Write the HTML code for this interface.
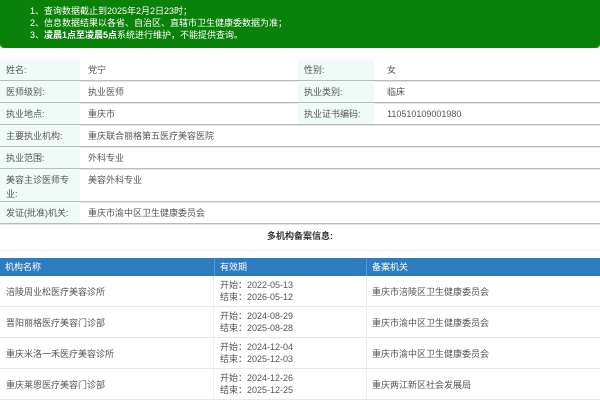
<!DOCTYPE html>
<html><head><meta charset="utf-8"><style>
*{margin:0;padding:0;box-sizing:border-box}
body{width:600px;height:400px;overflow:hidden;background:#fff;font-family:"Liberation Sans","Noto Sans CJK SC",sans-serif;font-size:9px;color:#555}
.banner{position:absolute;left:0;top:0;width:600px;height:48px;background:#0a820a;border-radius:0 0 4px 4px;color:#fff;font-size:9px;line-height:12px;padding:5px 0 0 30px}
.r{position:absolute;left:0;width:600px;border-bottom:1px solid #bbb;box-shadow:0 1px 0 #e4e4e4}
.c{position:absolute;top:0;height:100%;padding:0 0 0 6px;display:flex;align-items:center}
.lb{background:#f0fbf7}
.h{position:absolute;left:0;top:258px;width:600px;height:18px;background:#2e7cc0;color:#fff}
.h div{position:absolute;top:0;height:18px;line-height:18px;padding-left:5px;border-left:1px solid #5b9ad0}
.t{position:absolute;left:0;width:600px;border-bottom:1px solid #e6e6e6}
.t div{position:absolute;top:0;height:100%;display:flex;align-items:center;padding-left:6px}
</style></head><body>
<div class="banner">1、查询数据截止到2025年2月2日23时；<br>2、信息数据结果以各省、自治区、直辖市卫生健康委数据为准；<br>3、<b>凌晨1点至凌晨5点</b>系统进行维护，不能提供查询。</div>

<div class="r" style="top:59px;height:22px"><div class="c lb" style="left:0;width:80px">姓名:</div><div class="c" style="left:82px">党宁</div><div class="c lb" style="left:298px;width:76px">性别:</div><div class="c" style="left:381px">女</div></div>
<div class="r" style="top:81px;height:22px"><div class="c lb" style="left:0;width:80px">医师级别:</div><div class="c" style="left:82px">执业医师</div><div class="c lb" style="left:298px;width:76px">执业类别:</div><div class="c" style="left:381px">临床</div></div>
<div class="r" style="top:103px;height:22px"><div class="c lb" style="left:0;width:80px">执业地点:</div><div class="c" style="left:82px">重庆市</div><div class="c lb" style="left:298px;width:76px">执业证书编码:</div><div class="c" style="left:381px">110510109001980</div></div>
<div class="r" style="top:125px;height:22px"><div class="c lb" style="left:0;width:80px">主要执业机构:</div><div class="c" style="left:82px">重庆联合丽格第五医疗美容医院</div></div>
<div class="r" style="top:147px;height:22px"><div class="c lb" style="left:0;width:80px">执业范围:</div><div class="c" style="left:82px">外科专业</div></div>
<div class="r" style="top:169px;height:33px"><div class="c lb" style="left:0;width:80px;align-items:flex-start;padding-top:4px;line-height:14px">美容主诊医师专<br>业:</div><div class="c" style="left:82px;align-items:flex-start;padding-top:4px">美容外科专业</div></div>
<div class="r" style="top:202px;height:22px"><div class="c lb" style="left:0;width:80px">发证(批准)机关:</div><div class="c" style="left:82px">重庆市渝中区卫生健康委员会</div></div>
<div style="position:absolute;top:229px;left:0;width:600px;text-align:center;font-weight:bold;color:#333;line-height:14px">多机构备案信息:</div>
<div style="position:absolute;top:250px;left:0;width:600px;border-top:1px solid #f0f0f0"></div>

<div class="h"><div style="left:0;border:none">机构名称</div><div style="left:214px;width:152px">有效期</div><div style="left:366px">备案机关</div></div>
<div class="t" style="top:276px;height:31px"><div style="left:0">涪陵周业松医疗美容诊所</div><div style="left:214px;line-height:12px">开始：2022-05-13<br>结束：2026-05-12</div><div style="left:366px">重庆市涪陵区卫生健康委员会</div></div>
<div class="t" style="top:307px;height:31px"><div style="left:0">晋阳丽格医疗美容门诊部</div><div style="left:214px;line-height:12px">开始：2024-08-29<br>结束：2025-08-28</div><div style="left:366px">重庆市渝中区卫生健康委员会</div></div>
<div class="t" style="top:338px;height:31px"><div style="left:0">重庆米洛一禾医疗美容诊所</div><div style="left:214px;line-height:12px">开始：2024-12-04<br>结束：2025-12-03</div><div style="left:366px">重庆市渝中区卫生健康委员会</div></div>
<div class="t" style="top:369px;height:31px"><div style="left:0">重庆莱恩医疗美容门诊部</div><div style="left:214px;line-height:12px">开始：2024-12-26<br>结束：2025-12-25</div><div style="left:366px">重庆两江新区社会发展局</div></div>
<div style="position:absolute;left:213px;top:276px;height:124px;border-left:1px solid #eee"></div>
<div style="position:absolute;left:366px;top:276px;height:124px;border-left:1px solid #eee"></div>
</body></html>
